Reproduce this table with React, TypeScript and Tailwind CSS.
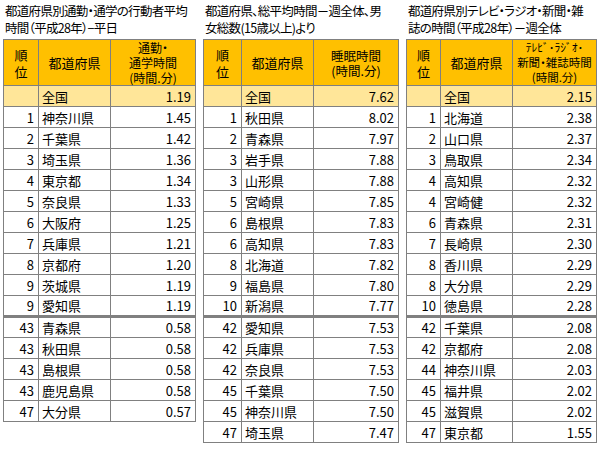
type Row = [string, string, string];

type Ranking = {
  title: string[];
  width: string;
  cols: [number, number, number];
  header: string[];
  headerSize: string;
  national: string;
  top: Row[];
  bottom: Row[];
};

const rankings: Ranking[] = [
  {
    title: ['都道府県別通勤・通学の行動者平均', '時間（平成28年）−平日'],
    width: 'w-[192px]',
    cols: [35, 72, 85],
    header: ['通勤・', '通学時間', '(時間.分)'],
    headerSize: 'text-[12px]',
    national: '1.19',
    top: [
      ['1', '神奈川県', '1.45'],
      ['2', '千葉県', '1.42'],
      ['3', '埼玉県', '1.36'],
      ['4', '東京都', '1.34'],
      ['5', '奈良県', '1.33'],
      ['6', '大阪府', '1.25'],
      ['7', '兵庫県', '1.21'],
      ['8', '京都府', '1.20'],
      ['9', '茨城県', '1.19'],
      ['9', '愛知県', '1.19'],
    ],
    bottom: [
      ['43', '青森県', '0.58'],
      ['43', '秋田県', '0.58'],
      ['43', '島根県', '0.58'],
      ['43', '鹿児島県', '0.58'],
      ['47', '大分県', '0.57'],
    ],
  },
  {
    title: ['都道府県、総平均時間－週全体、男', '女総数(15歳以上)より'],
    width: 'w-[195px]',
    cols: [38, 72, 85],
    header: ['睡眠時間', '(時間.分)'],
    headerSize: 'text-[12.5px]',
    national: '7.62',
    top: [
      ['1', '秋田県', '8.02'],
      ['2', '青森県', '7.97'],
      ['3', '岩手県', '7.88'],
      ['3', '山形県', '7.88'],
      ['5', '宮崎県', '7.85'],
      ['6', '島根県', '7.83'],
      ['6', '高知県', '7.83'],
      ['8', '北海道', '7.82'],
      ['9', '福島県', '7.80'],
      ['10', '新潟県', '7.77'],
    ],
    bottom: [
      ['42', '愛知県', '7.53'],
      ['42', '兵庫県', '7.53'],
      ['42', '奈良県', '7.53'],
      ['45', '千葉県', '7.50'],
      ['45', '神奈川県', '7.50'],
      ['47', '埼玉県', '7.47'],
    ],
  },
  {
    title: ['都道府県別テレビ・ラジオ・新聞・雑', '誌の時間（平成28年）－週全体'],
    width: 'w-[190px]',
    cols: [34, 72, 84],
    header: ['ﾃﾚﾋﾞ･ﾗｼﾞｵ･', '新聞・雑誌時間', '(時間.分)'],
    headerSize: 'text-[11.5px]',
    national: '2.15',
    top: [
      ['1', '北海道', '2.38'],
      ['2', '山口県', '2.37'],
      ['3', '鳥取県', '2.34'],
      ['4', '高知県', '2.32'],
      ['4', '宮崎健', '2.32'],
      ['6', '青森県', '2.31'],
      ['7', '長崎県', '2.30'],
      ['8', '香川県', '2.29'],
      ['8', '大分県', '2.29'],
      ['10', '徳島県', '2.28'],
    ],
    bottom: [
      ['42', '千葉県', '2.08'],
      ['42', '京都府', '2.08'],
      ['44', '神奈川県', '2.03'],
      ['45', '福井県', '2.02'],
      ['45', '滋賀県', '2.02'],
      ['47', '東京都', '1.55'],
    ],
  },
];

function RankTable({ data }: { data: Ranking }) {
  const cell = 'border border-[#808080] p-0';
  const rowCells = (r: Row) => (
    <>
      <td className={`${cell} pr-[4px] text-right`}>{r[0]}</td>
      <td className={`${cell} whitespace-nowrap pl-[3px] text-left`}>{r[1]}</td>
      <td className={`${cell} pr-[4px] text-right`}>{r[2]}</td>
    </>
  );

  return (
    <div className={`${data.width} shrink-0`}>
      <div className="h-[39px] whitespace-nowrap pl-[2px] pt-[2px] text-[12.5px] leading-[17px] tracking-[-0.7px]">
        {data.title.map((t) => (
          <div key={t}>{t}</div>
        ))}
      </div>
      <table className="w-full table-fixed border-collapse text-[13px] leading-[15px]">
        <colgroup>
          {data.cols.map((w, i) => (
            <col key={i} style={{ width: w }} />
          ))}
        </colgroup>
        <tbody>
          <tr className="h-[46px] bg-[#ffc000]">
            <td className={`${cell} text-center leading-[17px]`}>
              順<br />位
            </td>
            <td className={`${cell} text-center`}>都道府県</td>
            <td className={`${cell} ${data.headerSize} text-center leading-[15px]`}>
              {data.header.map((h) => (
                <div key={h} className="whitespace-nowrap">
                  {h}
                </div>
              ))}
            </td>
          </tr>
          <tr className="h-[21px] bg-[#ffe699]">
            {rowCells(['', '全国', data.national])}
          </tr>
          {data.top.map((r, i) => (
            <tr key={'t' + i} className="h-[21px] bg-white">
              {rowCells(r)}
            </tr>
          ))}
          {data.bottom.map((r, i) => (
            <tr
              key={'b' + i}
              className={`h-[21px] bg-white ${i === 0 ? '[&>td]:border-t-[3px] [&>td]:border-t-double' : ''}`}
            >
              {rowCells(r)}
            </tr>
          ))}
        </tbody>
      </table>
    </div>
  );
}

export default function App() {
  return (
    <div
      className="flex h-[450px] w-[600px] gap-[8px] overflow-hidden bg-white pl-[3px] text-black [font-feature-settings:'palt']"
      style={{ fontFamily: '"Noto Sans CJK JP", "Noto Sans", sans-serif' }}
    >
      {rankings.map((r) => (
        <RankTable key={r.title[0]} data={r} />
      ))}
    </div>
  );
}
